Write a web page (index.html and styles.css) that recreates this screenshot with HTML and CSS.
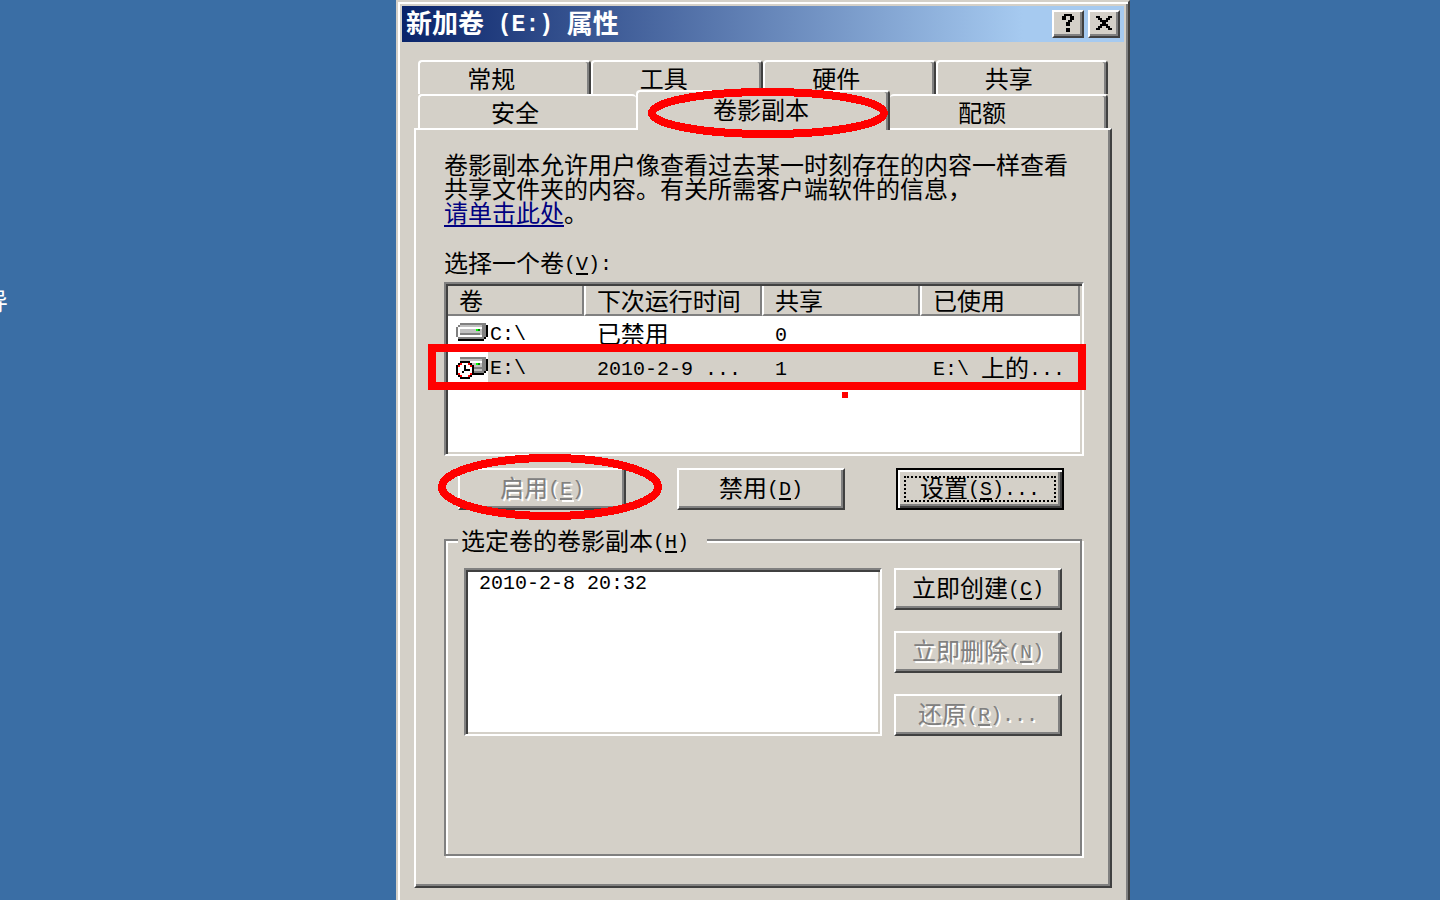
FILE: index.html
```
<!DOCTYPE html>
<html lang="zh-CN">
<head>
    <meta charset="UTF-8">
    <title>新加卷 (E:) 属性</title>
    <meta name="viewport" content="width=device-width, initial-scale=1">
    <link rel="stylesheet" href="styles.css">
</head>
<body>
    <div class="desktop-label">导</div>

    <main class="dialog">
        <header class="title-bar">
            <h1>新加卷<span class="en"> (E:) </span>属性</h1>
            <button type="button" class="title-button" aria-label="帮助">
                <svg viewBox="0 0 10 10" shape-rendering="crispEdges"><path d="M3 0h4v1h-4zM2 1h2v2h-2zM6 1h2v2h-2zM5 3h2v1h-2zM4 4h2v2h-2zM4 7h2v2h-2z"/></svg>
            </button>
            <button type="button" class="title-button" aria-label="关闭">
                <svg viewBox="0 0 10 10" shape-rendering="crispEdges"><path d="M1 1h2v1h-2zM7 1h2v1h-2zM2 2h2v1h-2zM6 2h2v1h-2zM3 3h4v1h-4zM4 4h2v1h-2zM3 5h4v1h-4zM2 6h2v1h-2zM6 6h2v1h-2zM1 7h2v1h-2zM7 7h2v1h-2z"/></svg>
            </button>
        </header>

        <div class="tabs" role="tablist">
            <div class="tab-row">
                <button type="button" role="tab" class="tab">常规</button>
                <button type="button" role="tab" class="tab">工具</button>
                <button type="button" role="tab" class="tab">硬件</button>
                <button type="button" role="tab" class="tab">共享</button>
            </div>
            <div class="tab-row front">
                <button type="button" role="tab" class="tab before-active">安全</button>
                <button type="button" role="tab" class="tab active" aria-selected="true">卷影副本</button>
                <button type="button" role="tab" class="tab after-active">配额</button>
            </div>
        </div>

        <section class="pane">
            <p class="intro">卷影副本允许用户像查看过去某一时刻存在的内容一样查看<br>共享文件夹的内容。有关所需客户端软件的信息，<br><a href="#">请单击此处</a>。</p>

            <h2 id="volumes-label">选择一个卷<span class="en">(<u>V</u>):</span></h2>
            <div class="list-view">
                <table aria-labelledby="volumes-label">
                    <colgroup>
                        <col class="col-volume">
                        <col class="col-time">
                        <col class="col-share">
                        <col class="col-used">
                    </colgroup>
                    <thead>
                        <tr><th>卷</th><th>下次运行时间</th><th>共享</th><th>已使用</th></tr>
                    </thead>
                    <tbody>
                        <tr>
                            <td>
                                <div class="volume">
                                    <svg class="drive" viewBox="0 0 16 12" shape-rendering="crispEdges">
                                        <path fill="#000" d="M15 1h1v6h-1zM14 7h1v1h-1zM1 8h13v1h-13z"/>
                                        <path fill="#808080" d="M2 0h13v7h-1v1h-13v-1h-1v-5h1v-1h1z"/>
                                        <path fill="#c0c0c0" d="M2 1h11v1h-11zM1 2h12v5h-12z"/>
                                        <path fill="#fff" d="M1 2h12v1h-12zM1 3h1v4h-1zM2 6h11v1h-11z"/>
                                        <path fill="#808080" d="M2 5h10v1h-10z"/>
                                        <path fill="#0f0" d="M10 3h1v1h-1z"/>
                                        <path fill="#008000" d="M11 3h1v1h-1z"/>
                                    </svg>
                                    <span class="en">C:\</span>
                                </div>
                            </td>
                            <td>已禁用</td>
                            <td><span class="en">0</span></td>
                            <td></td>
                        </tr>
                        <tr class="selected">
                            <td>
                                <div class="volume">
                                    <svg class="drive" viewBox="0 0 16 12" shape-rendering="crispEdges">
                                        <path fill="#000" d="M15 1h1v6h-1zM14 7h1v1h-1zM8 8h6v1h-6z"/>
                                        <path fill="#808080" d="M2 0h13v7h-1v1h-13v-6h1z"/>
                                        <path fill="#c0c0c0" d="M2 1h11v1h-11zM2 2h11v5h-11z"/>
                                        <path fill="#fff" d="M1 2h12v1h-12zM0 3h2v5h-2z"/>
                                        <path fill="#808080" d="M8 5h5v1h-5z"/>
                                        <path fill="#0f0" d="M10 3h1v1h-1z"/>
                                        <path fill="#008000" d="M11 3h1v1h-1z"/>
                                        <path fill="#000" d="M2 2h5v1h1v1h1v5h-1v1h-1v1h-5v-1h-1v-1h-1v-5h1v-1h1z"/>
                                        <path fill="#fff" d="M2 3h5v1h1v5h-1v1h-5v-1h-1v-5h1z"/>
                                        <path fill="#f00" d="M2 3h1v1h-1zM6 3h1v1h-1zM1 4h1v1h-1zM7 4h1v1h-1zM1 8h1v1h-1zM7 8h1v1h-1zM2 9h1v1h-1zM6 9h1v1h-1z"/>
                                        <path fill="#000" d="M4 4h1v2h2v1h-3v1h-1v-1h1z"/>
                                    </svg>
                                    <span class="en">E:\</span>
                                </div>
                            </td>
                            <td><span class="en">2010-2-9 ...</span></td>
                            <td><span class="en">1</span></td>
                            <td><span class="en">E:\ </span>上的<span class="en">...</span></td>
                        </tr>
                    </tbody>
                </table>
            </div>

            <div class="actions">
                <button type="button" class="button" disabled>启用<span class="en">(<u>E</u>)</span></button>
                <button type="button" class="button">禁用<span class="en">(<u>D</u>)</span></button>
                <button type="button" class="button default">设置<span class="en">(<u>S</u>)...</span></button>
            </div>

            <fieldset class="copies">
                <legend><label for="copies">选定卷的卷影副本<span class="en">(<u>H</u>)</span></label></legend>
                <select id="copies" class="copy-list" size="5">
                    <option>2010-2-8 20:32</option>
                </select>
                <div class="copy-buttons">
                    <button type="button" class="button">立即创建<span class="en">(<u>C</u>)</span></button>
                    <button type="button" class="button" disabled>立即删除<span class="en">(<u>N</u>)</span></button>
                    <button type="button" class="button" disabled>还原<span class="en">(<u>R</u>)...</span></button>
                </div>
            </fieldset>
        </section>

        <!-- red pen marks over the dialog -->
        <svg class="mark mark-tab" viewBox="0 0 240 50" shape-rendering="crispEdges"><ellipse cx="120" cy="25" rx="116" ry="21"/></svg>
        <svg class="mark mark-enable" viewBox="0 0 224 66" shape-rendering="crispEdges"><ellipse cx="112" cy="33" rx="108" ry="29"/></svg>
        <div class="mark mark-row"></div>
        <div class="mark mark-dot"></div>
    </main>
</body>
</html>
```
FILE: styles.css
```
* {
    box-sizing: border-box;
}

body {
    margin: 0;
    min-height: 100vh;
    position: relative;
    overflow: hidden;
    background-color: #3a6ea5;
    color: #000;
    font-family: "Noto Sans CJK SC", sans-serif;
    font-size: 24px;
    line-height: 24px;
}

button,
select {
    font: inherit;
    color: inherit;
}

/* half-width text, zero line height so it never stretches the line */
.en {
    font-family: "Liberation Mono", monospace;
    font-size: 20px;
    line-height: 0;
    vertical-align: 2px;
    white-space: pre;
}

u {
    text-decoration-thickness: 2px;
    text-underline-offset: 3px;
}

.desktop-label {
    position: absolute;
    left: -16px;
    top: 288px;
    color: #fff;
}

/* Dialog window */
.dialog {
    position: absolute;
    left: 396px;
    top: 0;
    width: 734px;
    min-height: 100vh;
    padding: 2px 2px 8px;
    background-color: #d4d0c8;
    border: 2px solid #d4d0c8;
    border-right-color: #404040;
    border-bottom: 0;
    box-shadow: inset 2px 2px 0 #fff, inset -2px 0 0 #808080;
}

.title-bar {
    display: flex;
    align-items: center;
    gap: 4px;
    height: 36px;
    margin: 2px 2px 0;
    padding: 0 4px;
    background: linear-gradient(to right, #0a246a, #a6caf0 86%);
}

.title-bar h1 {
    flex: 1;
    margin: 0;
    padding-bottom: 4px;
    color: #fff;
    font-size: 26px;
    line-height: 32px;
    font-weight: bold;
}

.title-bar .en {
    font-size: 23px;
}

.title-button {
    display: flex;
    align-items: center;
    justify-content: center;
    width: 32px;
    height: 28px;
    padding: 0;
    background-color: #d4d0c8;
    border: 2px solid #fff;
    border-right-color: #404040;
    border-bottom-color: #404040;
    box-shadow: inset -2px -2px 0 #808080;
}

.title-button svg {
    width: 20px;
    height: 20px;
}

/* Tabs */
.tabs {
    margin: 18px 18px 0;
}

.tab-row {
    display: grid;
    grid-template-columns: repeat(4, 1fr);
    height: 34px;
}

.tab-row.front {
    grid-template-columns: 218fr 254fr 218fr;
}

.tab {
    padding: 0 26px 0 0;
    background-color: #d4d0c8;
    border: 0 solid #fff;
    border-width: 2px 2px 0 2px;
    border-right-color: #404040;
    border-radius: 4px 4px 0 0;
    box-shadow: inset -2px 0 0 #808080;
}

.tab.before-active {
    border-right: 0;
    box-shadow: none;
}

.tab.after-active {
    padding-right: 32px;
    border-left: 0;
}

.tab.active {
    position: relative;
    z-index: 1;
    margin: -4px 0 -2px;
    padding: 0 4px 4px 0;
}

.pane {
    margin: 0 14px;
    padding: 22px 24px 30px 28px;
    border: 2px solid #fff;
    border-right-color: #404040;
    border-bottom-color: #404040;
    box-shadow: inset -2px -2px 0 #808080;
}

.intro {
    margin: 0;
}

.intro a {
    color: #000080;
    text-decoration-thickness: 2px;
    text-underline-offset: 3px;
}

.pane h2 {
    margin: 26px 0 8px;
    font-size: 24px;
    font-weight: normal;
}

/* Volume list */
.list-view,
.copy-list {
    background-color: #fff;
    border: 2px solid #808080;
    border-right-color: #fff;
    border-bottom-color: #fff;
    box-shadow: inset 2px 2px 0 #404040, inset -2px -2px 0 #d4d0c8;
}

.list-view {
    height: 174px;
    margin-right: 2px;
    padding: 2px;
}

.list-view table {
    width: 100%;
    border-collapse: separate;
    border-spacing: 0;
    table-layout: fixed;
}

.col-volume {
    width: 21.5%;
}

.col-time {
    width: 28.2%;
}

.col-share {
    width: 25%;
}

.list-view th {
    height: 30px;
    padding: 0 0 0 11px;
    text-align: left;
    font-weight: normal;
    background-color: #d4d0c8;
    border-left: 2px solid #fff;
    border-bottom: 2px solid #808080;
    box-shadow: inset -2px 0 0 #808080;
}

.list-view th:first-child {
    border-left: 0;
}

.list-view td {
    height: 34px;
    padding: 0 0 0 13px;
    white-space: nowrap;
}

.list-view td:first-child {
    padding: 4px 0 0 8px;
}

.selected td {
    background-color: #d4d0c8;
}

.selected td:first-child {
    background: linear-gradient(to right, #fff 40px, #d4d0c8 40px);
}

.volume {
    display: flex;
    align-items: center;
    gap: 2px;
}

.drive {
    width: 32px;
    height: 24px;
}

/* Push buttons */
.button {
    width: 168px;
    height: 42px;
    padding: 0 0 4px;
    white-space: nowrap;
    background-color: #d4d0c8;
    border: 2px solid #fff;
    border-right-color: #404040;
    border-bottom-color: #404040;
    box-shadow: inset -2px -2px 0 #808080;
}

.button:disabled {
    color: #808080;
    text-shadow: 2px 2px 0 #fff;
}

.button.default {
    border-color: #000;
    box-shadow: inset 2px 2px 0 #fff, inset -2px -2px 0 #404040, inset -4px -4px 0 #808080;
    outline: 2px dotted #000;
    outline-offset: -10px;
}

.actions {
    display: flex;
    justify-content: space-between;
    margin: 12px 22px 0 14px;
}

/* Shadow copies of the selected volume */
.copies {
    display: flex;
    justify-content: space-between;
    align-items: flex-start;
    min-width: 0;
    margin: 18px 4px 0 0;
    padding: 16px 18px 118px;
    border: 2px solid #808080;
    box-shadow: 2px 2px 0 #fff, inset 2px 2px 0 #fff;
}

.copies legend {
    margin-left: -6px;
    padding: 0 18px 0 3px;
    background-color: #d4d0c8;
}

.copies legend label {
    display: block;
}

.copy-list {
    flex: 1;
    height: 168px;
    margin-right: 12px;
    padding: 2px;
    border-radius: 0;
    outline: 0;
    overflow: hidden;
    font-family: "Liberation Mono", monospace;
    font-size: 20px;
}

.copy-list option {
    padding: 0 11px;
    line-height: 24px;
}

.copy-buttons {
    display: flex;
    flex-direction: column;
    gap: 21px;
}

/* Red marks */
.mark {
    position: absolute;
    pointer-events: none;
}

.mark ellipse {
    fill: none;
    stroke: #f00;
    stroke-width: 8px;
}

.mark-tab {
    left: 250px;
    top: 86px;
    width: 240px;
    height: 50px;
    z-index: 2;
}

.mark-enable {
    left: 40px;
    top: 452px;
    width: 224px;
    height: 66px;
}

.mark-row {
    left: 30px;
    top: 342px;
    width: 658px;
    height: 46px;
    border: 8px solid #f00;
}

.mark-dot {
    left: 444px;
    top: 390px;
    width: 6px;
    height: 6px;
    background-color: #f00;
}
```
